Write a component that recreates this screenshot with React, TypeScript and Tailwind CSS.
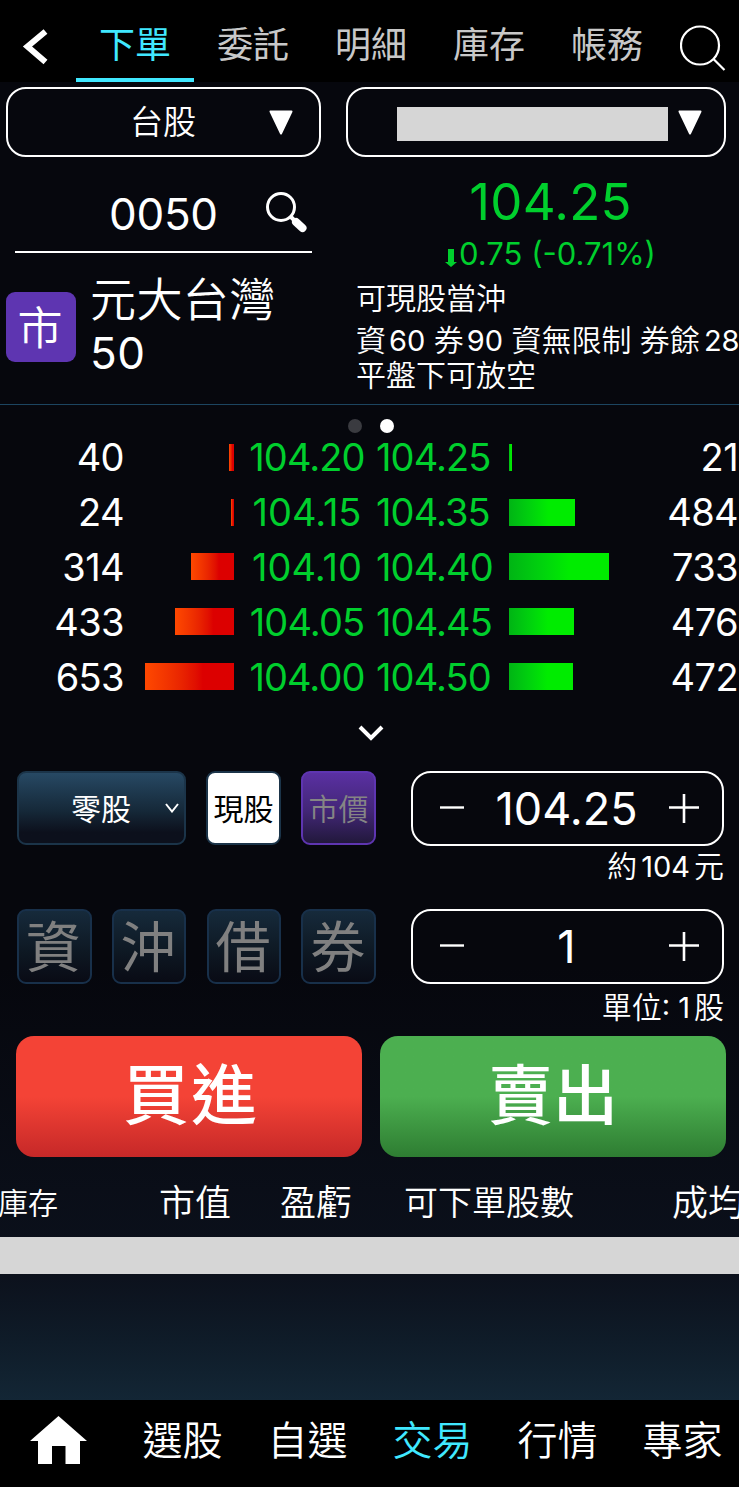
import clsx from "clsx";

const TABS = ["下單", "委託", "明細", "庫存", "帳務"];

const BIDS = [
    { qty: "40", bar: 5, price: "104.20" },
    { qty: "24", bar: 3, price: "104.15" },
    { qty: "314", bar: 43, price: "104.10" },
    { qty: "433", bar: 59, price: "104.05" },
    { qty: "653", bar: 89, price: "104.00" },
];

const ASKS = [
    { qty: "21", bar: 3, price: "104.25" },
    { qty: "484", bar: 66, price: "104.35" },
    { qty: "733", bar: 100, price: "104.40" },
    { qty: "476", bar: 65, price: "104.45" },
    { qty: "472", bar: 64, price: "104.50" },
];

const NAV = ["選股", "自選", "交易", "行情", "專家"];

function Header() {
    return (
        <header className="flex h-[82px] shrink-0 items-stretch bg-black">
            <button className="flex w-[76px] items-center pt-3 pl-[22px]">
                <svg width="27" height="36" viewBox="0 0 27 36" fill="none" stroke="#fff" strokeWidth="6">
                    <path d="M23.500 2.500 5.500 17.500l18 15.500" />
                </svg>
            </button>
            {TABS.map((tab, i) => (
                <button
                    key={tab}
                    className={clsx(
                        "w-[118px] shrink-0 border-b-4 pt-[13px] text-[36px] leading-[65px] font-normal",
                        i === 0 ? "border-[#40e8ff] text-[#40e8ff]" : "border-transparent text-[#c8c8c8]"
                    )}
                >
                    {tab}
                </button>
            ))}
            <button className="flex items-start pt-[25px] pl-[14px]">
                <svg width="46" height="46" viewBox="0 0 46 46" fill="none" stroke="#fff" strokeWidth="2.200">
                    <circle cx="20" cy="20.500" r="19" />
                    <path d="M33.500 34l11 11" />
                </svg>
            </button>
        </header>
    );
}

function Triangle() {
    return (
        <svg width="24" height="25" viewBox="0 0 24 25" fill="#fff" stroke="#fff" strokeWidth="2" strokeLinejoin="round">
            <path d="M1.500 1.500h21L12 23.500z" />
        </svg>
    );
}

function Selectors() {
    return (
        <div className="flex h-[75px] shrink-0 gap-[25px] pt-[5px] pl-[6px]">
            <button className="flex w-[315px] items-center rounded-[20px] border-2 border-white pr-[26px]">
                <span className="flex-1 pl-[49px] text-center text-[33px] leading-none">台股</span>
                <Triangle />
            </button>
            <button className="flex w-[380px] items-center gap-[10px] rounded-[20px] border-2 border-white pl-[49px]">
                <span className="mt-1 h-[34px] w-[271px] bg-[#d6d6d6]" />
                <Triangle />
            </button>
        </div>
    );
}

function Quote() {
    return (
        <section className="flex h-[248px] shrink-0 border-b border-[#1c4560]">
            <div className="w-[357px] shrink-0">
                <div className="ml-[15px] flex h-[96px] w-[297px] items-center border-b-2 border-white pt-[17px]">
                    <span className="w-[294px] pt-[2px] pl-[94px] text-[44px] leading-none font-normal tracking-[-0.3px]">0050</span>
                    <svg className="mr-[4px] shrink-0" width="42" height="42" viewBox="0 0 42 42" fill="none" stroke="#fff">
                        <circle cx="15" cy="15" r="13.500" strokeWidth="3" />
                        <path d="M24.500 24.500l5 5" strokeWidth="4" />
                        <path d="M30 30l6.500 6" strokeWidth="8" strokeLinecap="round" />
                    </svg>
                </div>
                <div className="flex pt-[21px] pl-[6px]">
                    <div className="mt-[18px] flex size-[70px] shrink-0 items-center justify-center rounded-[9px] bg-[#5e35b1] pt-[2px] pr-[2px] text-[45px] leading-none">
                        市
                    </div>
                    <div className="-mt-px ml-[14px] w-[200px] text-[46px] leading-[53px] tracking-[0.4px]">
                        元大台灣
                        <br />
                        <span className="text-[44px] font-normal">50</span>
                    </div>
                </div>
            </div>
            <div className="w-[382px] shrink-0 overflow-hidden whitespace-nowrap">
                <div className="mt-[15px] pl-[5px] text-center text-[51px] leading-[60px] font-normal tracking-[0.3px] text-[#00cf2d]">
                    104.25
                </div>
                <div className="flex h-[42px] items-center justify-center pl-[5px] text-[#00cf2d]">
                    <svg className="mt-[9px] mr-[2px]" width="12" height="18" viewBox="0 0 12 18" fill="currentColor">
                        <path d="M3 0h6v13h3l-6 5-6-5h3z" />
                    </svg>
                    <span className="text-[31px] leading-none font-normal">0.75 (-0.71%)</span>
                </div>
                <div className="mt-[7px] -ml-px text-[30px] leading-[35px]">
                    <div className="mb-[7px]">可現股當沖</div>
                    <div>
                        資<span className="ml-[3px] text-[29px] font-normal">60</span> 券
                        <span className="ml-[3px] text-[29px] font-normal">90</span> 資無限制 券餘
                        <span className="ml-[4px] text-[29px] font-normal">28</span>
                    </div>
                    <div>平盤下可放空</div>
                </div>
            </div>
        </section>
    );
}

// "1" is much narrower than the other digits, so those prices keep the normal spacing
const priceSpacing = (price: string) => (price.includes(".1") ? "tracking-normal" : "tracking-[-0.9px]");

function OrderBook() {
    return (
        <section className="h-[366px] shrink-0 font-normal">
            <div className="-mb-[3px] flex h-[28px] items-end gap-[18px] pl-[348px]">
                <span className="size-[14px] shrink-0 rounded-full bg-[#3a3b40]" />
                <span className="size-[14px] shrink-0 rounded-full bg-white" />
            </div>
            {BIDS.map((bid, i) => {
                const ask = ASKS[i];
                return (
                    <div key={bid.price} className="flex h-[54.8px] items-center text-[38px] leading-none">
                        <span className="w-[124px] shrink-0 text-right tracking-[-0.6px]">{bid.qty}</span>
                        <div className="flex w-[110px] shrink-0 justify-end">
                            <div
                                className="h-[27px] bg-linear-to-r from-[#ff4800] via-[#e41800] via-50% to-[#dc0000] to-65%"
                                style={{ width: bid.bar }}
                            />
                        </div>
                        <span className={clsx("w-[146px] shrink-0 text-center text-[#00cf2d]", priceSpacing(bid.price))}>
                            {bid.price}
                        </span>
                        <span className={clsx("w-[111px] shrink-0 text-[#00cf2d]", priceSpacing(ask.price))}>
                            <span className="-ml-[4px]">{ask.price}</span>
                        </span>
                        <div className="ml-[18px] flex w-[130px] shrink-0">
                            <div
                                className="h-[27px] bg-linear-to-r from-[#00b414] to-[#00ec00] to-60%"
                                style={{ width: ask.bar }}
                            />
                        </div>
                        <span className="w-[99px] shrink-0 text-right tracking-[-0.6px]">{ask.qty}</span>
                    </div>
                );
            })}
            <svg className="mt-[21px] ml-[358px]" width="27" height="17" viewBox="0 0 27 17" fill="none" stroke="#fff" strokeWidth="4">
                <path d="M2 2l11 11L24 2" />
            </svg>
        </section>
    );
}

function Stepper({ value }: { value: string }) {
    return (
        <div className="flex h-[75px] w-[313px] items-center justify-between rounded-[20px] border-2 border-white pr-[23px] pl-[27px]">
            <svg width="24" height="30" viewBox="0 0 24 30" stroke="#fff" strokeWidth="2.400">
                <path d="M0 13.500h24" />
            </svg>
            <span className="text-[45px] leading-none font-normal">{value}</span>
            <svg width="30" height="30" viewBox="0 0 30 30" stroke="#fff" strokeWidth="2.600">
                <path d="M0 13.500h30M15 0v29" />
            </svg>
        </div>
    );
}

function OrderForm() {
    return (
        <section className="flex h-[265px] shrink-0 justify-between pr-[15px] pl-[17px]">
            <div className="w-[359px]">
                <div className="flex h-[74px] justify-between text-[30px] leading-none">
                    <button className="flex w-[169px] items-center rounded-[9px] border-2 border-[#1b3449] bg-linear-to-b from-[#274964] via-[#152838] via-55% to-[#0c101c] to-85% pr-[5px]">
                        <span className="flex-1 pt-px pl-[18px] text-center font-normal">零股</span>
                        <svg width="14" height="10" viewBox="0 0 14 10" fill="none" stroke="#fff" strokeWidth="2">
                            <path d="M1 1l6 7.500L13 1" />
                        </svg>
                    </button>
                    <button className="w-[75px] rounded-[9px] border-2 border-[#1b3449] bg-white pt-px font-normal text-black">
                        <span className="-mx-2">現股</span>
                    </button>
                    <button className="w-[75px] rounded-[9px] border-2 border-[#5e35b1] bg-linear-to-b from-[#5a30a2] via-[#422676] via-55% to-[#22183c] pt-px text-[#858585]">
                        <span className="-mx-2">市價</span>
                    </button>
                </div>
                <div className="mt-[64px] flex justify-between">
                    {["資", "沖", "借", "券"].map((label) => (
                        <button
                            key={label}
                            className="flex h-[75px] w-[74.500px] items-center justify-center rounded-[9px] border-2 border-[#18304a] bg-linear-to-b from-[#162a3b] via-[#0e1924] via-55% to-[#090b15] pt-[2px] pr-[2px] text-[55px] leading-none font-normal text-[#808080]"
                        >
                            {label}
                        </button>
                    ))}
                </div>
            </div>
            <div className="w-[313px] text-right text-[30px]">
                <Stepper value="104.25" />
                <div className="h-[63px] leading-[41px]">
                    約<span className="mx-[4px] text-[29px] font-normal">104</span>元
                </div>
                <Stepper value="1" />
                <div className="leading-[46px]">
                    單位<span className="mr-[4px] text-[29px] font-normal">: 1</span>股
                </div>
            </div>
        </section>
    );
}

function Holdings() {
    return (
        <section className="flex h-[243px] shrink-0 flex-col">
            <div className="flex h-[80px] items-center overflow-hidden pt-[11px] text-[36px] leading-none whitespace-nowrap">
                <span className="-ml-[2px] w-[161px] shrink-0 text-[30px]">庫存</span>
                <span className="w-[121px] shrink-0">市值</span>
                <span className="w-[124px] shrink-0">盈虧</span>
                <span className="w-[268px] shrink-0 text-[34px]">可下單股數</span>
                <span className="shrink-0">成均</span>
            </div>
            <div className="h-[37px] bg-[#d6d6d6]" />
            <div className="flex-1 bg-linear-to-b from-[#0c111c] via-[#0f1c29] via-55% to-[#132635]" />
        </section>
    );
}

function BottomNav() {
    return (
        <nav className="flex h-[87px] shrink-0 items-center bg-black pb-[6px] text-[40px] leading-none">
            <button className="w-[120px] shrink-0 pl-[30px]">
                <svg width="58" height="50" viewBox="0 0 58 50" fill="#fff">
                    <path d="M28.500 0 57 25h-7v23H35.500V30H22v18H8V25H0z" />
                </svg>
            </button>
            {NAV.map((item) => (
                <button
                    key={item}
                    className={clsx("w-[125px] shrink-0 text-center", item === "交易" ? "text-[#40e8ff]" : "text-white")}
                >
                    {item}
                </button>
            ))}
        </nav>
    );
}

export default function App() {
    return (
        <div className="flex h-[1487px] w-[739px] flex-col overflow-hidden bg-[#06070d] bg-linear-to-b from-[#06070d] from-65% to-[#0b101b] to-84% font-[Inter,'Noto_Sans_CJK_TC',sans-serif] font-[350] text-white">
            <Header />
            <Selectors />
            <Quote />
            <OrderBook />
            <OrderForm />
            <div className="flex h-[121px] shrink-0 gap-[18px] pl-[16px] text-[66px] leading-none font-medium">
                <button className="w-[346px] rounded-[18px] bg-linear-to-b from-[#f44336] from-50% to-[#c62828] pb-[3px] pl-[4px] tracking-[2px]">
                    買進
                </button>
                <button className="w-[346px] rounded-[18px] bg-linear-to-b from-[#4caf50] from-50% to-[#2e7d32] pb-[2px] text-[65px]">
                    賣出
                </button>
            </div>
            <Holdings />
            <BottomNav />
        </div>
    );
}
